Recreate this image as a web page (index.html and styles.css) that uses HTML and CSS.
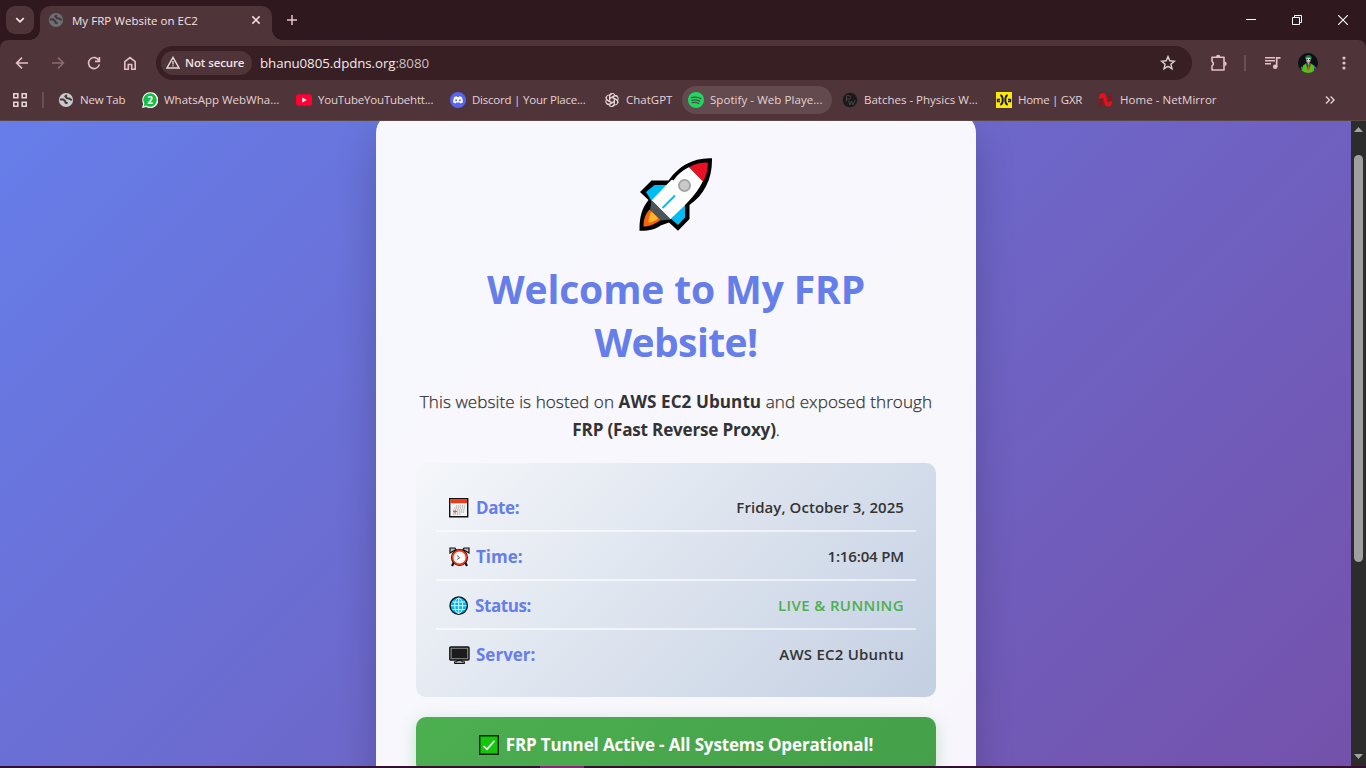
FILE: index.html
```html
<!DOCTYPE html>
<html lang="en">
<head>
<meta charset="utf-8">
<title>My FRP Website on EC2</title>
<link rel="stylesheet" href="styles.css">
</head>
<body>
<svg width="0" height="0" class="defs">
  <symbol id="globe" viewBox="0 0 16 16"><circle cx="8" cy="8" r="7.1" fill="currentColor"/><path d="M2 7.400 5.400 7.600 7.200 9.200 7.600 10.600 9.600 11.200M8.800 3 7.400 4.400 9 6.200 11.200 6.400 13.800 8.200" fill="none" stroke="var(--hole)" stroke-width="2"/></symbol>
</svg>
<div class="browser">
  <header class="titlebar">
    <button class="tabsearch" aria-label="Search tabs"><svg width="10" height="10" viewBox="0 0 10 10"><path d="M1.3 3.2 5 6.8 8.7 3.2" fill="none" stroke="#f3e4e6" stroke-width="1.8"/></svg></button>
    <div class="tab">
      <svg class="tab-icon" width="16" height="16"><use href="#globe"/></svg>
      <span class="tab-title">My FRP Website on EC2</span>
      <svg class="tab-close" width="10" height="10" viewBox="0 0 10 10"><path d="M1.4 1.4 8.6 8.6M8.6 1.4 1.4 8.6" stroke="#f3e4e6" stroke-width="1.5"/></svg>
    </div>
    <svg class="newtab" width="12" height="12" viewBox="0 0 12 12"><path d="M6 1v10M1 6h10" stroke="#e9c3c9" stroke-width="1.5"/></svg>
    <div class="winbtns">
      <svg width="10" height="12" viewBox="0 0 10 12"><path d="M0 4.5h10" stroke="#fff"/></svg>
      <svg width="10" height="10" viewBox="0 0 10 10"><path d="M.5 2.5h7v7h-7zM2.5 2.5v-2h7v7h-2" fill="none" stroke="#fff"/></svg>
      <svg width="10" height="10" viewBox="0 0 10 10"><path d="M0 0 10 10M10 0 0 10" stroke="#fff" stroke-width="1.1"/></svg>
    </div>
  </header>
  <nav class="toolbar">
    <div class="navicons">
      <svg width="14" height="14" viewBox="0 0 14 14"><path d="M13 7H2M7 1.6 1.6 7 7 12.4" fill="none" stroke="#e6bfc6" stroke-width="1.6"/></svg>
      <svg width="14" height="14" viewBox="0 0 14 14"><path d="M1 7h11M7 1.6 12.4 7 7 12.4" fill="none" stroke="#8a6a70" stroke-width="1.6"/></svg>
      <svg width="14" height="14" viewBox="0 0 14 14"><path d="M12 4.6A5.5 5.5 0 1 0 12.4 8.4M12.4 1v4.4H8" fill="none" stroke="#e6bfc6" stroke-width="1.6"/></svg>
      <svg width="14" height="14" viewBox="0 0 14 14"><path d="M1.8 5.6 7 1.5l5.2 4.1v7.6H8.7V8.5H5.3v4.7H1.8z" fill="none" stroke="#e6bfc6" stroke-width="1.6"/></svg>
    </div>
    <div class="omnibox">
      <div class="security"><svg width="14" height="13" viewBox="0 0 14 13"><path d="M7 1.4 13 12H1z" fill="none" stroke="#e9dadc" stroke-width="1.4"/><path d="M7 5v3.4M7 9.3v1.3" stroke="#e9dadc" stroke-width="1.3"/></svg><span>Not secure</span></div>
      <div class="url"><span class="host">bhanu0805.dpdns.org</span>:8080</div>
      <svg class="star" width="16" height="16" viewBox="0 0 16 16"><path d="m8 1.6 1.8 4.2 4.6.4-3.5 3 1.1 4.5L8 11.3l-4 2.4 1.1-4.5-3.5-3 4.6-.4z" fill="none" stroke="#dccfd1" stroke-width="1.4"/></svg>
    </div>
    <svg class="ext" width="18" height="18" viewBox="0 0 18 18"><path d="M2 3.300H14V16H2V12Q4.700 9.700 2 7.300z" fill="none" stroke="#e6bfc6" stroke-width="1.600" stroke-linejoin="round"/><path d="M6 3a2.200 2.200 0 0 1 4.400 0zM14.500 7.500a2.200 2.200 0 0 1 0 4.400z" fill="#e6bfc6"/></svg>
    <i class="sep"></i>
    <svg class="media" width="16" height="14" viewBox="0 0 16 14"><path d="M0 1.8h10M0 4.8h10M0 7.8h6" stroke="#e6bfc6" stroke-width="1.5"/><path d="M11.7 11V1.8h3.8" fill="none" stroke="#e6bfc6" stroke-width="1.7"/><circle cx="10.2" cy="10.8" r="2.3" fill="#e6bfc6"/></svg>
    <svg class="avatar" width="20" height="20" viewBox="0 0 20 20"><circle cx="10" cy="10" r="10" fill="#0d0f16"/><path d="M3.500 17.500 5 12.500 8 10.500h5l3.500 2.500-.5 5a10 10 0 0 1-12.500-.5z" fill="#4fc31c"/><path d="M7 5C7.300 1.500 12.500.8 13.800 4.500L13 7H8z" fill="#157735"/><path d="M8.300 4.800h4.200L12.300 8.500 10.600 11 8.500 8.700z" fill="#d5d7ce"/><path d="M8.800 6.600h1.200M11 6.600h1.200" stroke="#23252a" stroke-width="1"/><path d="m9.200 8.800 1.300.6 1.300-.6" stroke="#a9272f" fill="none" stroke-width=".8"/><path d="M8 10.500 10.200 18 13 11l-2.500 1z" fill="#27313a"/><path d="M9.900 12h1.400l.3 4.500-1.200 1.500-.8-1.500z" fill="#db4f38"/><path d="m2.500 15 1.500-2 .5 4.500zM15.800 12.500l2.700 2-1.600 3z" fill="#6558ad"/></svg>
    <svg class="dots" width="4" height="14" viewBox="0 0 4 14"><g fill="#e6bfc6"><circle cx="2" cy="2" r="1.6"/><circle cx="2" cy="7" r="1.6"/><circle cx="2" cy="12" r="1.6"/></g></svg>
  </nav>
  <nav class="bookmarks">
    <svg class="apps" width="14" height="14" viewBox="0 0 14 14"><path d="M.8.8h4v4h-4zM9.2.8h4v4h-4zM.8 9.2h4v4h-4zM9.2 9.2h4v4h-4z" fill="none" stroke="#e3d3d5" stroke-width="1.6"/></svg>
    <i class="bsep"></i>
    <a class="bm w80 bm-globe"><svg width="16" height="16"><use href="#globe"/></svg><span class="t1">New Tab</span></a>
    <a class="bm"><svg width="16" height="16" viewBox="0 0 16 16"><path d="m0 16 1.2-4.2A8 8 0 1 1 4.2 15z" fill="#fff"/><path d="m1.6 14.4.8-2.8a6.7 6.7 0 1 1 2 2z" fill="#12bf45"/><text x="8.1" y="11.7" class="badge">2</text></svg><span class="t2">WhatsApp WebWha...</span></a>
    <a class="bm"><svg width="16" height="16" viewBox="0 0 16 16"><rect y="2.3" width="16" height="11.4" rx="2.6" fill="#ff0033"/><path d="m6.3 5.6 4.4 2.4-4.4 2.4z" fill="#fff"/></svg><span class="t3">YouTubeYouTubehtt...</span></a>
    <a class="bm"><svg width="16" height="16" viewBox="0 0 16 16"><circle cx="8" cy="8" r="8" fill="#5865f2"/><path d="M4.7 4.8 6.8 4.2l.4.8h1.6l.4-.8 2.1.6c1.2 1.7 1.7 3.500 1.500 5.600l-2.400 1-.7-1H6.300l-.7 1-2.400-1c-.2-2.100.3-3.900 1.500-5.600z" fill="#fff"/><circle cx="6.1" cy="8.3" r="1" fill="#5865f2"/><circle cx="9.9" cy="8.3" r="1" fill="#5865f2"/></svg><span class="t4">Discord | Your Place...</span></a>
    <a class="bm w80"><svg width="16" height="16" viewBox="0 0 16 16" fill="none" stroke="#e3d3d5" stroke-width="1.15"><path id="petal" d="M5.600 9.500V4.200a2.800 2.800 0 0 1 5.200-1.300M5.600 6.600l4.500-2.600a2.800 2.800 0 0 1 3.500.7"/><use href="#petal" transform="rotate(60 8 8)"/><use href="#petal" transform="rotate(120 8 8)"/><use href="#petal" transform="rotate(180 8 8)"/><use href="#petal" transform="rotate(240 8 8)"/><use href="#petal" transform="rotate(300 8 8)"/></svg><span class="t5">ChatGPT</span></a>
    <a class="bm hover"><svg width="16" height="16" viewBox="0 0 16 16"><circle cx="8" cy="8" r="8" fill="#1ed760"/><path d="M3.3 5.7c3-.9 6.8-.7 9.6.9M3.8 8.3c2.6-.7 5.600-.4 8 .9M4.200 10.700c2.200-.5 4.700-.3 6.700.8" fill="none" stroke="#4d4a43" stroke-width="1.3" stroke-linecap="round"/></svg><span class="t6">Spotify - Web Playe...</span></a>
    <a class="bm"><svg width="16" height="16" viewBox="0 0 16 16"><circle cx="8" cy="8" r="7.300" fill="#1b191a"/><path d="M4.500 9.500V3.600h2.200a1.600 1.600 0 0 1 0 3.500H4.500M6.500 8.500l1.400 4.500 1.600-4 1.400 4 2.300-5" fill="none" stroke="#4c484b" stroke-width=".9"/></svg><span class="t7">Batches - Physics W...</span></a>
    <a class="bm w98"><svg width="16" height="16" viewBox="0 0 16 16"><path d="M0 0h16v16H0z" fill="#ffe90a"/><path d="M4.300 3.300C7.500 4 7.500 12 4.300 12.700M11.700 3.300C8.500 4 8.500 12 11.700 12.700" fill="none" stroke="#19191c" stroke-width="2"/><path d="M4 9.500H1.500V7.500H4M12 9.500h2.500V7.500H12" fill="none" stroke="#19191c" stroke-width="1.300"/></svg><span class="t8">Home | GXR</span></a>
    <a class="bm w131"><svg width="16" height="16" viewBox="0 0 16 16"><path d="M2.600 13.500V7M12.400 9V2.500" fill="none" stroke="#a30b13" stroke-width="3"/><path d="M2.600 6.500C2.600 2 6 2 6.700 5.200L8 10.500C8.700 14 12.300 13.600 12.400 9.500" fill="none" stroke="#f10d18" stroke-width="3.400"/></svg><span class="t9">Home - NetMirror</span></a>
    <svg class="more" width="10" height="10" viewBox="0 0 10 10"><path d="m1 1.400 3.500 3.600L1 8.600M5.600 1.400 9.100 5 5.600 8.600" fill="none" stroke="#e3d3d5" stroke-width="1.400"/></svg>
  </nav>
  <div class="viewport">
    <main class="page">
      <section class="card">
        <svg class="rocket" width="74" height="74" viewBox="0 0 74 74">
          <path d="M73 .3C54-.5 40 8 29.500 22.500H12.500L1 34l8.500 8C3 50 .3 59 .5 72.800 10 73 17 71 21.500 67.500L30 64.500l9 8.300L50.500 61V47C65 37 73.500 21 73 .3z" fill="#000"/>
          <path d="M15.500 27H28L12.500 43 7 34zM46 45v14.500l-7 7.500-8-7z" fill="#00bcf2"/>
          <path d="M50 9C36 16 24 31 12.500 42.500L31 61.500C43 50 57 38 64 23z" fill="#fff"/>
          <path d="M50 9C56 6 62 4.600 68.800 4.600c0 7.500-1.300 12.900-4.800 18.900z" fill="#e81123"/>
          <path d="M12.500 42 32 61.500l-10.500 1-10.500-10z" fill="#4a5459"/>
          <path d="M10.500 51.500 21.500 62C16 66 11 68.500 4.500 68.500c0-6 1-11.500 6-17z" fill="#f7630c"/>
          <path d="m12.500 53.500 7 7C15.500 63 12.500 64.500 9.500 64.500c0-4 .8-8 3-11z" fill="#ffb52b"/>
          <path d="M33 21.500C38 14.500 44 9.500 51 6.500" stroke="#000" stroke-width="3.500" fill="none"/>
          <path d="m23.500 50 12.500-12.500" stroke="#00bcf2" stroke-width="2"/>
          <circle cx="45.500" cy="27.500" r="5.600" fill="#c9c9c9" stroke="#a2a2a2" stroke-width="1.800"/>
        </svg>
        <h1><span class="h1a">Welcome to My FRP</span><br><span class="h1b">Website!</span></h1>
        <p><span class="pa">This website is hosted on <strong>AWS EC2 Ubuntu</strong> and exposed through</span><br><span class="pb"><strong>FRP (Fast Reverse Proxy)</strong>.</span></p>
        <div class="info">
          <div class="row">
            <svg width="20" height="20" viewBox="0 0 20 20"><path d="M.7.7h18v18H.7z" fill="#f4f4f4" stroke="#111" stroke-width="1.400"/><path d="M1.400 1.400h16.600v3.800H1.400z" fill="#f03a17"/><path d="M7 8h9M5 10h11M4 12h12M4 14h11M4 16h8" stroke="#bbb" stroke-width="1.300" stroke-dasharray="1.300 .7"/><path d="M4 13.500h4M6 12v3.500" stroke="#f0573a"/></svg>
            <span class="label l1">Date:</span><span class="value v1">Friday, October 3, 2025</span>
          </div>
          <div class="row">
            <svg width="21" height="20" viewBox="0 0 21 20"><path d="m5 15-2 4M16 15l2 4" stroke="#111" stroke-width="2.200"/><path d="M1 6V1h5l1 1.500zM20 6V1h-5l-1 1.500z" fill="#bbb" stroke="#111" stroke-width="1.200"/><circle cx="10.500" cy="10.500" r="8.500" fill="#111"/><circle cx="10.500" cy="10.500" r="6.900" fill="#fff" stroke="#f03a17" stroke-width="1.700"/><circle cx="10.500" cy="10.500" r="4.800" fill="none" stroke="#bbb" stroke-width=".8" stroke-dasharray=".8 1.710"/><path d="m8 8.500 2.700 2.200L8 12.500" fill="none" stroke="#555"/></svg>
            <span class="label l2">Time:</span><span class="value v2">1:16:04 PM</span>
          </div>
          <div class="row">
            <svg width="20" height="20" viewBox="0 0 20 20"><circle cx="9.700" cy="9.700" r="8.700" fill="#00b7f0" stroke="#0b1419" stroke-width="1.400"/><path d="M9.700 2v15.500M2 9.700h15.500M3.500 6h12.500M3.500 13.500h12.500" stroke="#def6ff" fill="none"/><ellipse cx="9.700" cy="9.700" rx="4" ry="7.700" fill="none" stroke="#def6ff"/></svg>
            <span class="label l3">Status:</span><span class="value v3 live">LIVE &amp; RUNNING</span>
          </div>
          <div class="row">
            <svg width="21" height="20" viewBox="0 0 21 20"><rect x=".8" y="2" width="19.200" height="13" rx="1" fill="#888" stroke="#111" stroke-width="1.400"/><path d="M2.700 3.800h15.400v9.400H2.700z" fill="#1b1b1b"/><path d="M8 15.500h5v1.300h2.500v1.700h-10v-1.700H8z" fill="#aaa" stroke="#111"/></svg>
            <span class="label l4">Server:</span><span class="value v4">AWS EC2 Ubuntu</span>
          </div>
        </div>
        <div class="banner">
          <svg width="20" height="20" viewBox="0 0 20 20"><path d="M.7.7h18.600v18.600H.7z" fill="#16c60c" stroke="#0b240b" stroke-width="1.400"/><path d="m4.500 11 3.500 3.300 7.500-8.600" fill="none" stroke="#fff" stroke-width="1.700"/></svg>
          <span class="bt">FRP Tunnel Active - All Systems Operational!</span>
        </div>
      </section>
    </main>
    <aside class="scrollbar">
      <svg width="9" height="5" viewBox="0 0 9 5"><path d="M0 5 4.500 0 9 5z" fill="#a3a3a3"/></svg>
      <i class="thumb"></i>
      <svg width="9" height="5" viewBox="0 0 9 5"><path d="M0 0h9L4.500 5z" fill="#a3a3a3"/></svg>
    </aside>
  </div>
  <footer class="taskedge"><i></i></footer>
</div>
</body>
</html>
```
FILE: styles.css
```css
* { box-sizing: border-box; }
body { margin: 0; font-family: "Open Sans", "Noto Sans", sans-serif; overflow: hidden; }
svg { display: block; flex: none; }
span { white-space: nowrap; }
.defs { position: absolute; }
.browser { width: 1366px; height: 768px; display: flex; flex-direction: column; overflow: hidden; background: #2f191e; }

.titlebar { height: 40px; flex: none; display: flex; align-items: flex-start; background: #2f191e; }
.tabsearch { width: 28px; height: 28px; margin: 6px 0 0 6px; padding: 0; border: 0; border-radius: 9px; background: #4f343a; display: flex; align-items: center; justify-content: center; }
.tab { position: relative; width: 232px; height: 34px; margin: 6px 0 0 6px; padding: 0 11px 6px 8px; display: flex; align-items: center; background: #4f343a; border-radius: 10px 10px 0 0; }
.tab::before, .tab::after { content: ""; position: absolute; bottom: 0; width: 10px; height: 10px; }
.tab::before { left: -10px; background: radial-gradient(circle at 0 0, transparent 9.5px, #4f343a 10px); }
.tab::after { right: -10px; background: radial-gradient(circle at 100% 0, transparent 9.5px, #4f343a 10px); }
.tab-icon { color: #6b7075; --hole: #453539; }
.tab-title { margin-left: 8px; font-size: 11.500px; letter-spacing: .03px; color: #f3e4e6; }
.tab-close { margin-left: auto; }
.newtab { margin: 14px 0 0 14px; }
.winbtns { margin: 15px 18px 0 auto; display: flex; gap: 36px; }

.toolbar { height: 45px; flex: none; display: flex; align-items: center; background: #4f343a; border-radius: 8px 8px 0 0; }
.navicons { display: flex; gap: 22px; margin-left: 15px; width: 141px; }
.omnibox { width: 1036px; height: 34px; border-radius: 17px; background: #371f23; display: flex; align-items: center; padding-left: 5px; }
.security { width: 91px; height: 24px; border-radius: 12px; background: #4f343a; display: flex; align-items: center; padding-left: 5px; }
.security span { margin-left: 5px; font-size: 11.500px; font-weight: 600; letter-spacing: -.1px; color: #f3e4e6; }
.url { margin-left: 8px; font-size: 13.300px; letter-spacing: -.08px; color: #cdbfc1; }
.host { color: #f5e9ea; }
.star { margin: 0 16px 0 auto; }
.ext { margin-left: 18px; }
.sep { width: 2px; height: 16px; background: #6d4f55; margin-left: 16px; }
.media { margin-left: 19px; }
.avatar { margin-left: 17px; }
.dots { margin-left: 24px; }

.bookmarks { height: 36px; padding-bottom: 6px; flex: none; display: flex; align-items: center; background: #4f343a; border-bottom: 1px solid #5b4746; }
.apps { margin-left: 13px; }
.bsep { width: 2px; height: 16px; background: #6d4f55; margin: 0 8px 0 15px; }
.bm { width: 150px; height: 28px; margin-right: 4px; padding-left: 6px; display: flex; align-items: center; gap: 6px; font-size: 11.500px; color: #e3d3d5; border-radius: 14px; flex: none; }
.bm-globe svg { color: #c8cacd; --hole: #45383b; }
.w80 { width: 80px; }
.w98 { width: 98px; }
.w131 { width: 131px; }
.hover { background: #624a4e; }
.t1 { letter-spacing: -.2px; }
.t3 { letter-spacing: -.18px; }
.t4 { letter-spacing: -.22px; }
.t6 { letter-spacing: .06px; }
.t8 { letter-spacing: -.28px; }
.t9 { letter-spacing: .06px; }
.badge { font: 700 10px "Open Sans", sans-serif; fill: #fff; text-anchor: middle; }
.more { margin: 0 31px 0 auto; }

.viewport { height: 645px; flex: none; display: flex; }
.page { width: 1351px; overflow: hidden; background: linear-gradient(135deg, #667eea 0%, #764ba2 100%) 0 -27px / 1351px 970px no-repeat; }
.card { width: 600px; height: 880px; margin: -8px 0 0 376px; padding: 45px 40px 40px; border-radius: 20px; background: rgba(255,255,255,.95); box-shadow: 0 20px 40px rgba(0,0,0,.2); text-align: center; color: #333; }
.rocket { margin: 0 auto; }
h1 { margin: 30px 0 0; font-size: 39px; line-height: 53px; font-weight: 700; color: #667eea; }
.h1a { letter-spacing: -.12px; }
.h1b { letter-spacing: -.6px; }
p { margin: 20px 0 0; font-size: 17.100px; line-height: 28px; font-weight: 300; -webkit-text-stroke: .25px #333; }
.pa { letter-spacing: .06px; }
.pb { letter-spacing: -.2px; }
p strong { font-weight: 700; -webkit-text-stroke: 0; }
.info { margin-top: 19px; height: 234px; padding: 20px; border-radius: 10px; background: linear-gradient(135deg, #f5f7fa 0%, #c3cfe2 100%); }
.row { height: 49px; padding: 2px 12px 0 13px; display: flex; align-items: center; border-bottom: 2px solid rgba(255,255,255,.6); }
.row:last-child { border-bottom: 0; padding-top: 0; }
.label { margin-left: 7px; font-size: 17px; font-weight: 700; color: #667eea; }
.l1 { letter-spacing: -.4px; }
.l2 { margin-left: 6px; letter-spacing: 0; }
.l3 { margin-left: 6px; letter-spacing: -.4px; }
.l4 { margin-left: 6px; }
.value { margin-left: auto; padding-bottom: 1px; font-size: 15px; font-weight: 600; }
.v1 { letter-spacing: .06px; }
.v2 { letter-spacing: -.15px; }
.v3 { letter-spacing: .38px; }
.v4 { padding-bottom: 2px; letter-spacing: .22px; }
.value.live { color: #4caf50; }
.banner { margin-top: 20px; height: 56px; padding-bottom: 1px; border-radius: 10px; background: linear-gradient(135deg, #4caf50, #45a049); box-shadow: 0 4px 15px rgba(76,175,80,.3); color: #fff; font-size: 17px; font-weight: 700; display: flex; align-items: center; justify-content: center; gap: 7px; }
.bt { letter-spacing: -.14px; padding-bottom: 1px; }

.scrollbar { width: 15px; background: #2c2c2c; display: flex; flex-direction: column; align-items: center; padding: 6px 0 7px; }
.thumb { width: 9px; height: 407px; margin: 23px 0 auto; border-radius: 5px; background: #9f9f9f; }
.taskedge { height: 2px; background: #32112e; }
.taskedge i { display: block; width: 44px; height: 2px; margin-left: 540px; background: #842873; }
```
